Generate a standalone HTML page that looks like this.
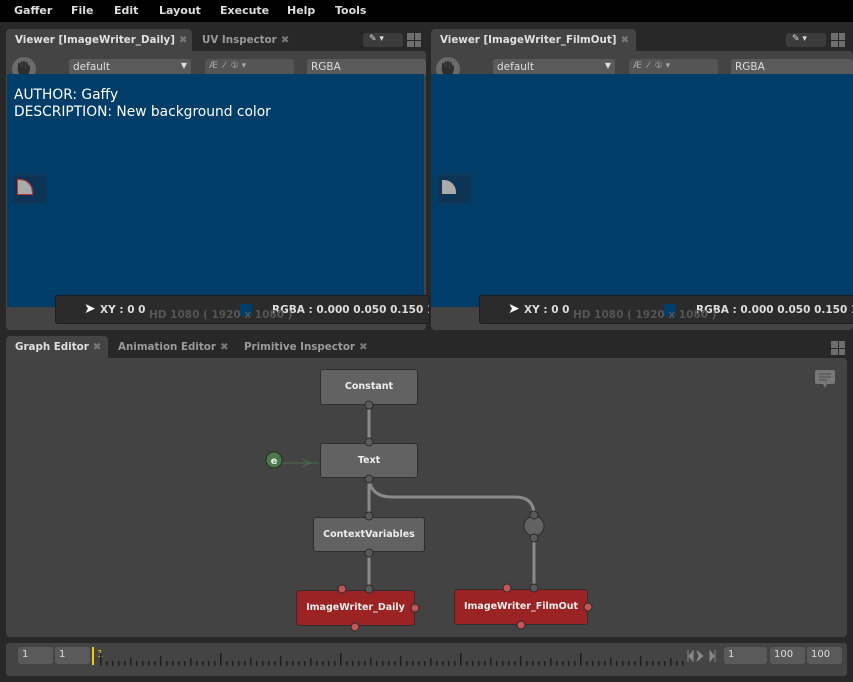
<!DOCTYPE html>
<html><head><style>
*{margin:0;padding:0;box-sizing:border-box}
body{width:853px;height:682px;background:#282828;font-family:"DejaVu Sans","Liberation Sans",sans-serif;font-size:11px;color:#ddd;position:relative;overflow:hidden}
.a{position:absolute}
.menu{left:0;top:0;width:853px;height:22px;background:#000;font-weight:bold;color:#ddd}
.menu span{position:absolute;top:4px;font-size:11px}
.tab{height:22px;font-weight:bold;font-size:10.3px;padding:5px 0 0 9px;color:#9a9a9a;white-space:nowrap}
.tab.on{background:#444;color:#e0e0e0;border-radius:4px 4px 0 0}
.x{color:#777;margin-left:4px}
.panel{background:#444;border-radius:0 4px 4px 4px}
.blue{background:#003d69}
.dd{background:#5a5a5a;border-radius:3px;height:17px;font-size:10.5px;padding:2px 4px;color:#ddd}
.status{background:#2b2b2b;border:1px solid #1e1e1e;border-radius:3px;height:29px;font-weight:bold;color:#ddd;font-size:10.5px}
.node{background:#626262;border:1px solid #2e2e2e;border-radius:3px;color:#eee;font-weight:bold;font-size:9.5px;text-align:center}
.red{background:#9c2323;border:1px solid #2e2e2e;border-radius:3px;color:#eee;font-weight:bold;font-size:9.5px;text-align:center}
.fld{background:#5a5a5a;border-radius:3px;height:17px;font-size:10px;padding:2px 4px;color:#ddd}
.grid{width:14px;height:14px;display:grid;grid-template-columns:1fr 1fr;gap:1px}
.grid i{background:#6e6e6e}
</style></head><body>
<div class="a menu">
<span style="left:14px">Gaffer</span><span style="left:71px">File</span><span style="left:114px">Edit</span><span style="left:159px">Layout</span><span style="left:220px">Execute</span><span style="left:287px">Help</span><span style="left:335px">Tools</span>
</div>

<!-- left viewer -->
<div class="a tab on" style="left:6px;top:29px;width:186px">Viewer [ImageWriter_Daily]<span class="x">✖</span></div>
<div class="a tab" style="left:193px;top:29px">UV Inspector<span class="x">✖</span></div>
<div class="a" style="left:363px;top:33px;width:40px;height:14px;background:#3c3c3c;border-radius:3px;font-size:9px;color:#ddd;padding:1px 0 0 6px">✎ ▾</div>
<div class="a grid" style="left:407px;top:33px"><i></i><i></i><i></i><i></i></div>
<div class="a panel" style="left:6px;top:51px;width:420px;height:279px"></div>
<svg class="a" style="left:12px;top:57px" width="24" height="24"><circle cx="12" cy="12" r="12" fill="#6a6a6a"/><path d="M7 11 V7 M9.5 11 V5.5 M12 11 V5 M14.5 11 V6 M7 10 Q6 15 10 18 H14 Q17 15 17 10 L16 9 L14.5 12" stroke="#2e2e2e" stroke-width="2.2" fill="#2e2e2e" stroke-linecap="round"/></svg>
<div class="a dd" style="left:69px;top:59px;width:122px">default<span style="float:right;font-size:8px">▼</span></div>
<div class="a dd" style="left:205px;top:59px;width:89px;background:#555;color:#aaa;font-size:9px">Æ&nbsp; ⁄ &nbsp;① ▾</div>
<div class="a dd" style="left:307px;top:59px;width:119px">RGBA</div>
<div class="a blue" style="left:7px;top:74px;width:417px;height:233px"></div>
<div class="a" style="left:14px;top:87px;color:#fff;font-size:13.8px;line-height:17px">AUTHOR: Gaffy<br>DESCRIPTION: New background color</div>
<div class="a" style="left:12px;top:174px;width:35px;height:30px;border-radius:4px;background:#0d3454;border:1px solid #123a5a"></div>
<div class="a" style="left:18px;top:180px;width:14px;height:14px;background:#aaa;border-radius:0 12px 0 0;outline:1px solid #b33"></div>
<div class="a status" style="left:55px;top:295px;width:375px;overflow:hidden"><span class="a" style="left:44px;top:8px">XY : 0 0</span><span class="a" style="left:184px;top:8px;width:12px;height:12px;background:#003d69"></span><span class="a" style="left:216px;top:8px;white-space:nowrap">RGBA : 0.000 0.050 0.150 1</span><span class="a" style="left:93px;top:13px;color:#555;white-space:nowrap">HD 1080 ( 1920 x 1080 )</span></div>
<div class="a" style="left:84px;top:301px;color:#fff;font-size:14px">➤</div>

<!-- right viewer -->
<div class="a tab on" style="left:431px;top:29px;width:205px">Viewer [ImageWriter_FilmOut]<span class="x">✖</span></div>
<div class="a" style="left:786px;top:33px;width:40px;height:14px;background:#3c3c3c;border-radius:3px;font-size:9px;color:#ddd;padding:1px 0 0 6px">✎ ▾</div>
<div class="a grid" style="left:831px;top:33px"><i></i><i></i><i></i><i></i></div>
<div class="a panel" style="left:431px;top:51px;width:422px;height:279px"></div>
<svg class="a" style="left:436px;top:57px" width="24" height="24"><circle cx="12" cy="12" r="12" fill="#6a6a6a"/><path d="M7 11 V7 M9.5 11 V5.5 M12 11 V5 M14.5 11 V6 M7 10 Q6 15 10 18 H14 Q17 15 17 10 L16 9 L14.5 12" stroke="#2e2e2e" stroke-width="2.2" fill="#2e2e2e" stroke-linecap="round"/></svg>
<div class="a dd" style="left:493px;top:59px;width:122px">default<span style="float:right;font-size:8px">▼</span></div>
<div class="a dd" style="left:629px;top:59px;width:89px;background:#555;color:#aaa;font-size:9px">Æ&nbsp; ⁄ &nbsp;① ▾</div>
<div class="a dd" style="left:731px;top:59px;width:122px">RGBA</div>
<div class="a blue" style="left:431px;top:74px;width:422px;height:233px"></div>
<div class="a" style="left:436px;top:174px;width:35px;height:30px;border-radius:4px;background:#0d3454;border:1px solid #123a5a"></div>
<div class="a" style="left:442px;top:180px;width:14px;height:14px;background:#aaa;border-radius:0 12px 0 0"></div>
<div class="a status" style="left:479px;top:295px;width:380px;overflow:hidden"><span class="a" style="left:44px;top:8px">XY : 0 0</span><span class="a" style="left:184px;top:8px;width:12px;height:12px;background:#003d69"></span><span class="a" style="left:216px;top:8px;white-space:nowrap">RGBA : 0.000 0.050 0.150 1</span><span class="a" style="left:93px;top:13px;color:#555;white-space:nowrap">HD 1080 ( 1920 x 1080 )</span></div>
<div class="a" style="left:508px;top:301px;color:#fff;font-size:14px">➤</div>

<!-- graph editor -->
<div class="a tab on" style="left:6px;top:336px;width:102px">Graph Editor<span class="x">✖</span></div>
<div class="a tab" style="left:109px;top:336px">Animation Editor<span class="x">✖</span></div>
<div class="a tab" style="left:235px;top:336px">Primitive Inspector<span class="x">✖</span></div>
<div class="a grid" style="left:831px;top:341px"><i></i><i></i><i></i><i></i></div>
<div class="a panel" style="left:6px;top:358px;width:841px;height:279px;background:#434343"></div>
<svg class="a" style="left:815px;top:370px" width="21" height="19"><rect x="0" y="0" width="20" height="14" rx="2" fill="#777"/><path d="M8 14 L10 18 L12 14Z" fill="#777"/><path d="M4 4H16M4 7H16M4 10H12" stroke="#555" stroke-width="1.2"/></svg>
<svg class="a" style="left:0;top:0" width="853" height="682">
<g stroke="#8a8a8a" stroke-width="3" fill="none">
<line x1="369" y1="405" x2="369" y2="442"/>
<line x1="369" y1="478" x2="369" y2="516"/>
<path d="M369 480 Q372 497 392 497 L515 497 Q534 497 534 515"/>
<line x1="369" y1="553" x2="369" y2="589"/>
<line x1="534" y1="538" x2="534" y2="588"/>
</g>
<line x1="282" y1="463" x2="319" y2="463" stroke="#4b6e4b" stroke-width="1"/>
<path d="M302 459 L310 463 L302 467" stroke="#4b6e4b" fill="none"/>
<circle cx="274" cy="460" r="8" fill="#4a7a4a" stroke="#2a2a2a"/>
<text x="274" y="464" fill="#eee" font-size="10" font-weight="bold" text-anchor="middle" font-family="DejaVu Sans">e</text>
<circle cx="534" cy="526" r="10" fill="#626262" stroke="#2a2a2a"/>
<g fill="#5a5a5a" stroke="#2a2a2a">
<circle cx="534" cy="515" r="4"/><circle cx="534" cy="538" r="4"/>
</g>
</svg>
<div class="a node" style="left:320px;top:369px;width:98px;height:36px;line-height:34px">Constant</div>
<div class="a node" style="left:320px;top:443px;width:98px;height:35px;line-height:33px">Text</div>
<div class="a node" style="left:313px;top:517px;width:112px;height:35px;line-height:33px">ContextVariables</div>
<div class="a red" style="left:296px;top:590px;width:119px;height:36px;line-height:34px">ImageWriter_Daily</div>
<div class="a red" style="left:454px;top:589px;width:134px;height:36px;line-height:34px">ImageWriter_FilmOut</div>
<svg class="a" style="left:0;top:0;pointer-events:none" width="853" height="682">
<g fill="#5a5a5a" stroke="#2a2a2a">
<circle cx="369" cy="405" r="4"/><circle cx="369" cy="442" r="4"/><circle cx="369" cy="479" r="4"/><circle cx="369" cy="516" r="4"/><circle cx="369" cy="553" r="4"/><circle cx="369" cy="589" r="4"/><circle cx="534" cy="588" r="4"/>
</g>
<g fill="#c25555" stroke="#2a2a2a">
<circle cx="342" cy="589" r="4"/><circle cx="415" cy="608" r="4"/><circle cx="355" cy="627" r="4"/><circle cx="507" cy="588" r="4"/><circle cx="588" cy="607" r="4"/><circle cx="521" cy="625" r="4"/>
</g>
</svg>

<!-- timeline -->
<div class="a" style="left:6px;top:643px;width:841px;height:33px;background:#444;border-radius:3px"></div>
<div class="a fld" style="left:18px;top:647px;width:35px">1</div>
<div class="a fld" style="left:55px;top:647px;width:35px">1</div>
<div class="a" style="left:92px;top:647px;width:2px;height:18px;background:#f0d000"></div>
<div class="a" style="left:97px;top:649px;color:#e8c800;font-size:10px">1</div>
<svg class="a" style="left:96px;top:653px" width="590" height="13" id="tk"></svg>
<svg class="a" style="left:687px;top:649px" width="34" height="14"><path d="M1 1V13M2 7L6 2V12Z M10 2L16 7L10 12L12 7Z M28 1V13M27 7L23 2V12Z" fill="#888" stroke="#888" stroke-width="1"/></svg>
<div class="a fld" style="left:724px;top:647px;width:43px">1</div>
<div class="a fld" style="left:770px;top:647px;width:35px">100</div>
<div class="a fld" style="left:807px;top:647px;width:35px">100</div>
<script>
var s='';for(var i=0;i<99;i++){var x=4+i*6;var h=(i%20==0)?13:(i%10==0?10:(i%5==0?8:5));s+='<rect x="'+x+'" y="'+(13-h)+'" width="1.5" height="'+h+'" fill="#1e1e1e"/>';}
document.getElementById('tk').innerHTML=s;
</script>
</body></html>
